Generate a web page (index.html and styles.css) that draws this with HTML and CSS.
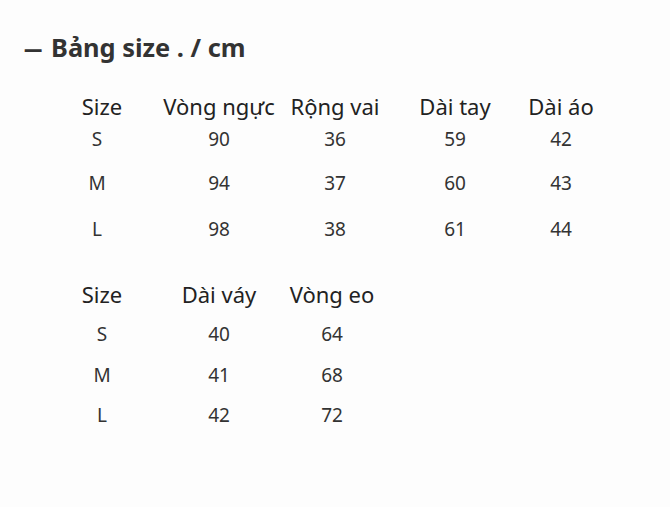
FILE: index.html
```html
<!DOCTYPE html>
<html lang="vi">
<head>
<meta charset="utf-8">
<title>Bảng size</title>
<link rel="stylesheet" href="styles.css">
</head>
<body>
<div class="page">
  <h1 class="title"><span class="dash">—</span> Bảng size . / cm</h1>

  <div class="table t1">
    <div class="cell head">Size</div>
    <div class="cell head">Vòng ngực</div>
    <div class="cell head">Rộng vai</div>
    <div class="cell head">Dài tay</div>
    <div class="cell head">Dài áo</div>

    <div class="cell size">S</div>
    <div class="cell">90</div>
    <div class="cell">36</div>
    <div class="cell">59</div>
    <div class="cell">42</div>

    <div class="cell size">M</div>
    <div class="cell">94</div>
    <div class="cell">37</div>
    <div class="cell">60</div>
    <div class="cell">43</div>

    <div class="cell size">L</div>
    <div class="cell">98</div>
    <div class="cell">38</div>
    <div class="cell">61</div>
    <div class="cell">44</div>
  </div>

  <div class="table t2">
    <div class="cell head">Size</div>
    <div class="cell head">Dài váy</div>
    <div class="cell head">Vòng eo</div>

    <div class="cell size">S</div>
    <div class="cell">40</div>
    <div class="cell">64</div>

    <div class="cell size">M</div>
    <div class="cell">41</div>
    <div class="cell">68</div>

    <div class="cell size">L</div>
    <div class="cell">42</div>
    <div class="cell">72</div>
  </div>
</div>
</body>
</html>
```

FILE: styles.css
```css
html, body {
  margin: 0;
  padding: 0;
  background: #fdfdfd;
}

.page {
  width: 670px;
  height: 507px;
  font-family: "Noto Sans", "Open Sans", sans-serif;
  color: #2a2a2a;
  overflow: hidden;
}

.title {
  margin: 29px 0 0 0;
  padding-left: 24px;
  font-size: 25.4px;
  line-height: 36px;
  font-weight: 700;
  color: #333;
}

.dash {
  display: inline-block;
  transform: scaleX(0.72);
  transform-origin: left center;
  margin-right: -5px;
}

.table {
  display: grid;
  margin-left: 50px;
  justify-items: center;
}

.t1 {
  margin-top: 27px;
  grid-template-columns: 104px 130px 102px 138px 74px;
  grid-template-rows: 28px 38px 50px 42px;
}

.t2 {
  margin-top: 30px;
  grid-template-columns: 104px 130px 96px;
  grid-template-rows: 28px 52px 30px 50px;
}

.cell {
  font-size: 19px;
  color: #333;
  white-space: nowrap;
  align-self: stretch;
  display: flex;
  align-items: center;
}

.head {
  font-size: 22px;
  color: #222;
}

.t1 .size {
  margin-right: 10px;
}
```
